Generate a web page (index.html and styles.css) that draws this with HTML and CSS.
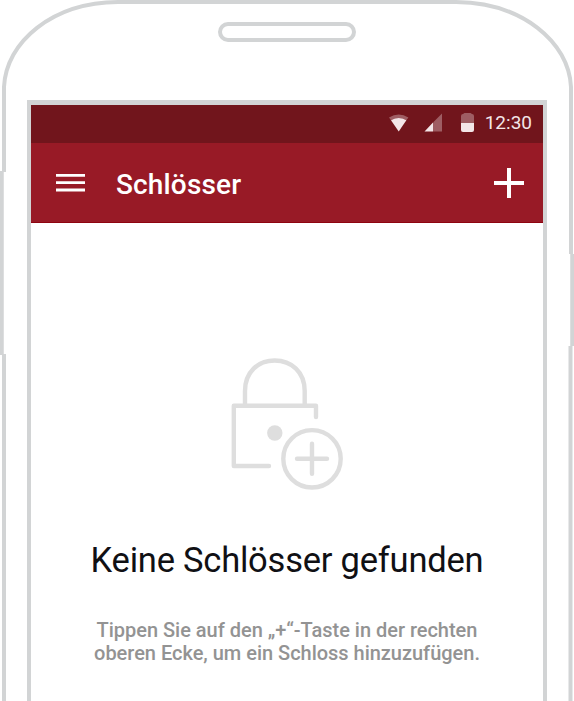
FILE: index.html
```html
<!DOCTYPE html>
<html lang="de">
<head>
<meta charset="utf-8">
<title>Schlösser</title>
<link rel="stylesheet" href="styles.css">
</head>
<body>
<div class="phone">
  <svg class="shell" viewBox="0 0 574 701" fill="none" stroke="#d2d4d5" aria-hidden="true">
    <path d="M4 710V354M4 172V87C6 42 52 2.500 118 2H456C522 2.500 569 42 571 87V254" stroke-width="4"/>
    <path d="M570.5 346V710" stroke-width="4"/>
    <path d="M1.5 171V355M572.5 254V346" stroke-width="4.5"/>
  </svg>
  <div class="speaker"></div>
  <main class="screen">
    <div class="status">
      <svg class="status-icons" viewBox="0 0 88 24" fill="#f3e6e8" aria-hidden="true">
        <path d="M0 4.5Q9.7-1.500 19.400 4.500L17.400 7.300Q9.700 2.700 2 7.300Z" opacity=".35"/>
        <path d="M2 7.3Q9.7 2.7 17.4 7.3L9.7 18.500Z"/>
        <path d="M44 9.500L53 .500V18.500H44Z" opacity=".35"/>
        <path d="M44 9.500V18.500H35.500Z"/>
        <path d="M72 10V3Q72 1 74 1L75.500 0H81.500L83 1Q85 1 85 3V10Z" opacity=".35"/>
        <path d="M72 10H85V17Q85 19 83 19H74Q72 19 72 17Z"/>
      </svg>
      <span class="clock">12:30</span>
    </div>
    <header class="bar">
      <svg class="menu" viewBox="0 0 29 20" stroke="#fff" stroke-width="2.800"><path d="M0 2.400H29M0 9.700H29M0 17H29"/></svg>
      <h1>Schlösser</h1>
      <svg class="add" viewBox="0 0 30 30" stroke="#fff" stroke-width="4"><path d="M0 15H30M15 0V30"/></svg>
    </header>
    <section class="empty">
      <svg class="lock" viewBox="0 0 112 132" fill="none" stroke="#dedede" stroke-width="4.400" stroke-linecap="round" stroke-linejoin="round">
        <path d="M14 47V33C14 14 27 2.500 43.700 2.500S73.700 14 73.700 33V47"/>
        <path d="M85 59V47.800H2.800V108H38"/>
        <circle cx="43.800" cy="75" r="7.700" fill="#dedede" stroke="none"/>
        <circle cx="81" cy="100.800" r="28.700"/>
        <path d="M66 100.800H96M81 85.800V115.800"/>
      </svg>
      <h2>Keine Schlösser gefunden</h2>
      <p>Tippen Sie auf den „+“-Taste in der rechten<br>oberen Ecke, um ein Schloss hinzuzufügen.</p>
    </section>
  </main>
</div>
</body>
</html>
```
FILE: styles.css
```css
* { box-sizing: border-box; }
body { margin: 0; background: #fff; font-family: Roboto, sans-serif; }
.phone { position: relative; width: 574px; height: 701px; padding: 22px 27px 0; overflow: hidden; }
.shell { position: absolute; left: 0; top: 0; width: 574px; height: 701px; }
.speaker { width: 138px; height: 20px; margin: 0 auto 58px 191px; border: 4px solid #d2d4d5; border-radius: 10px; }
.screen { width: 520px; height: 610px; border: 4px solid #d2d4d5; border-top-width: 5px; }
.status { height: 38px; padding: 0 11px 3px 0; display: flex; align-items: center; justify-content: flex-end; background: #71151c; color: #f3e6e8; }
.status-icons { width: 88px; height: 24px; margin: 4px 8px 0 0; }
.clock { font-size: 19px; line-height: 25px; }
.bar { height: 80px; padding: 1px 19px 0 25px; display: flex; align-items: center; background: #981a26; border-bottom: 1px solid #8e0410; color: #fff; }
.menu { width: 29px; height: 20px; }
.bar h1 { margin: 3px auto 0 31px; font-size: 28px; line-height: 34px; font-weight: 500; letter-spacing: .15px; }
.add { width: 30px; height: 30px; }
.empty { display: flex; flex-direction: column; align-items: center; padding-top: 135px; text-align: center; }
.lock { width: 112px; height: 132px; }
.empty h2 { margin: 48px 0 0; font-size: 34.500px; line-height: 44px; font-weight: 400; letter-spacing: -.22px; color: #101014; white-space: nowrap; }
.empty p { margin: 37px 0 0; font-size: 20px; line-height: 23px; font-weight: 500; letter-spacing: -.02px; color: #939393; white-space: nowrap; }
```
